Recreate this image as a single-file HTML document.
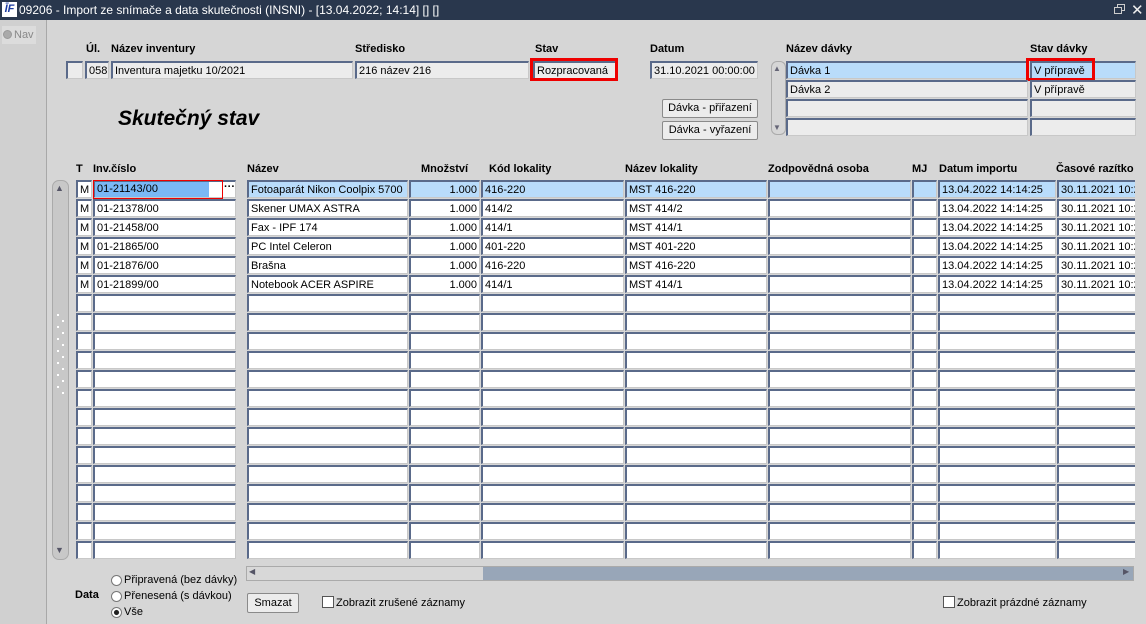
<!DOCTYPE html>
<html><head><meta charset="utf-8"><style>
*{box-sizing:border-box}
body{margin:0;width:1146px;height:624px;background:#d6d6d6;font-family:"Liberation Sans",Arial,sans-serif;font-size:11px;color:#000;position:relative;overflow:hidden}
.a{position:absolute}
.f{position:absolute;height:18px;background:#fff;border:1px solid #c8c8c8;border-top:2px solid #5a6a8a;border-left:2px solid #5a6a8a;padding:1px 2px 0 2px;white-space:nowrap;overflow:hidden;line-height:14px}
.g{background:#ececec}
.s{background:#b9dcfb}
.h{position:absolute;font-weight:bold;font-size:11px;white-space:nowrap}
.btn{position:absolute;background:#ececec;border:1px solid #8a8a8a;border-radius:2px;text-align:center;line-height:16px;font-size:11px}
.rad{position:absolute;width:11px;height:11px;border-radius:50%;background:#fff;border:1px solid #777}
.cb{position:absolute;width:12px;height:12px;background:#fff;border:1px solid #555}
</style></head><body>
<div class="a" style="left:0;top:0;width:1146px;height:20px;background:#29374d"></div>
<div class="a" style="left:2px;top:2px;width:15px;height:15px;background:#fff;color:#1a3aa0;font-weight:bold;font-style:italic;font-size:11px;line-height:15px;text-align:center">ĪF</div>
<div class="a" style="left:19px;top:3px;color:#fff;font-size:12px">09206 - Import ze snímače a data skutečnosti (INSNI) - [13.04.2022; 14:14] [] []</div>
<div class="a" style="left:1117px;top:4px;width:8px;height:7px;border:1px solid #ccc"></div>
<div class="a" style="left:1114px;top:7px;width:8px;height:7px;border:1px solid #ccc;background:#29374d"></div>
<div class="a" style="left:1131px;top:1px;color:#eee;font-size:15px">✕</div>
<div class="a" style="left:0;top:20px;width:47px;height:604px;background:#d0d0d0;border-right:1px solid #a8a8a8"></div>
<div class="a" style="left:2px;top:26px;width:34px;height:18px;background:#dcdcdc"></div>
<div class="rad" style="left:3px;top:30px;width:9px;height:9px;background:#aaa;border-color:#999"></div>
<div class="a" style="left:14px;top:29px;color:#888">Nav</div>

<div class="h" style="left:86px;top:43px">Úl.</div>
<div class="h" style="left:111px;top:43px">Název inventury</div>
<div class="h" style="left:355px;top:43px">Středisko</div>
<div class="h" style="left:535px;top:43px">Stav</div>
<div class="h" style="left:650px;top:43px">Datum</div>
<div class="h" style="left:786px;top:43px">Název dávky</div>
<div class="h" style="left:1030px;top:43px">Stav dávky</div>
<div class="f g" style="left:66px;top:61px;width:17px"></div>
<div class="f g" style="left:85px;top:61px;width:24px">058</div>
<div class="f g" style="left:111px;top:61px;width:242px">Inventura majetku 10/2021</div>
<div class="f g" style="left:355px;top:61px;width:174px">216 název 216</div>
<div class="f g" style="left:533px;top:61px;width:83px">Rozpracovaná</div>
<div class="a" style="left:530px;top:58px;width:88px;height:23px;border:3px solid #e00"></div>
<div class="f g" style="left:650px;top:61px;width:108px">31.10.2021 00:00:00</div>
<div class="a" style="left:771px;top:61px;width:15px;height:74px;background:#d6d6d6;border:1px solid #aaa;border-radius:6px"></div>
<div class="a" style="left:773px;top:64px;font-size:8px;color:#667">▲</div>
<div class="a" style="left:773px;top:123px;font-size:8px;color:#667">▼</div>
<div class="f s" style="left:786px;top:61px;width:242px">Dávka 1</div>
<div class="f s" style="left:1030px;top:61px;width:106px">V přípravě</div>
<div class="a" style="left:1026px;top:58px;width:69px;height:23px;border:3px solid #e00"></div>
<div class="f g" style="left:786px;top:80px;width:242px">Dávka 2</div>
<div class="f g" style="left:1030px;top:80px;width:106px">V přípravě</div>
<div class="f g" style="left:786px;top:99px;width:242px"></div>
<div class="f g" style="left:1030px;top:99px;width:106px"></div>
<div class="f g" style="left:786px;top:118px;width:242px"></div>
<div class="f g" style="left:1030px;top:118px;width:106px"></div>
<div class="btn" style="left:662px;top:99px;width:96px;height:19px">Dávka - přiřazení</div>
<div class="btn" style="left:662px;top:121px;width:96px;height:19px">Dávka - vyřazení</div>
<div class="a" style="left:118px;top:107px;font-size:21px;font-weight:bold;font-style:italic">Skutečný stav</div>

<div class="h" style="left:76px;top:163px">T</div>
<div class="h" style="left:93px;top:163px">Inv.číslo</div>
<div class="h" style="left:247px;top:163px">Název</div>
<div class="h" style="left:421px;top:163px">Množství</div>
<div class="h" style="left:489px;top:163px">Kód lokality</div>
<div class="h" style="left:625px;top:163px">Název lokality</div>
<div class="h" style="left:768px;top:163px">Zodpovědná osoba</div>
<div class="h" style="left:912px;top:163px">MJ</div>
<div class="h" style="left:939px;top:163px">Datum importu</div>
<div class="h" style="left:1056px;top:163px">Časové razítko</div>
<div class="a" style="left:52px;top:180px;width:17px;height:380px;background:#c8c8c8;border:1px solid #aaa;border-radius:7px"></div>
<div class="a" style="left:55px;top:183px;font-size:9px;color:#556">▲</div>
<div class="a" style="left:55px;top:545px;font-size:9px;color:#556">▼</div>
<div id="grid"></div>
<div class="a" style="left:1135px;top:160px;width:11px;height:400px;background:#d6d6d6;z-index:5"></div>

<div class="a" style="left:246px;top:566px;width:888px;height:15px;background:#98a6b8;border:1px solid #aaa"></div>
<div class="a" style="left:247px;top:567px;width:236px;height:13px;background:#d8d8d8"></div>
<div class="a" style="left:249px;top:567px;font-size:8px;color:#556">◀</div>
<div class="a" style="left:1123px;top:567px;font-size:8px;color:#556">▶</div>

<div class="h" style="left:75px;top:589px">Data</div>
<div class="rad" style="left:111px;top:575px"></div><div class="a" style="left:124px;top:574px">Připravená (bez dávky)</div>
<div class="rad" style="left:111px;top:591px"></div><div class="a" style="left:124px;top:590px">Přenesená (s dávkou)</div>
<div class="rad" style="left:111px;top:607px;background:radial-gradient(#222 35%,#fff 45%)"></div><div class="a" style="left:124px;top:606px">Vše</div>
<div class="btn" style="left:247px;top:593px;width:52px;height:20px;line-height:18px">Smazat</div>
<div class="cb" style="left:322px;top:596px"></div><div class="a" style="left:336px;top:597px">Zobrazit zrušené záznamy</div>
<div class="cb" style="left:943px;top:596px"></div><div class="a" style="left:957px;top:597px">Zobrazit prázdné záznamy</div>
<script>
var cols=[[76,16],[93,143],[247,161],[409,71],[481,143],[625,142],[768,143],[912,25],[938,118],[1057,90]];
var data=[["M","01-21143/00","Fotoaparát Nikon Coolpix 5700","1.000","416-220","MST 416-220","","","13.04.2022 14:14:25","30.11.2021 10:2"],
["M","01-21378/00","Skener UMAX ASTRA","1.000","414/2","MST 414/2","","","13.04.2022 14:14:25","30.11.2021 10:2"],
["M","01-21458/00","Fax - IPF 174","1.000","414/1","MST 414/1","","","13.04.2022 14:14:25","30.11.2021 10:2"],
["M","01-21865/00","PC Intel Celeron","1.000","401-220","MST 401-220","","","13.04.2022 14:14:25","30.11.2021 10:2"],
["M","01-21876/00","Brašna","1.000","416-220","MST 416-220","","","13.04.2022 14:14:25","30.11.2021 10:2"],
["M","01-21899/00","Notebook ACER ASPIRE","1.000","414/1","MST 414/1","","","13.04.2022 14:14:25","30.11.2021 10:2"]];
var h="";
for(var r=0;r<20;r++){var y=180+r*19;for(var c=0;c<10;c++){var d=data[r]?data[r][c]:"";var cls="f";
if(r==0&&c!=0)cls+=" s";
var st="left:"+cols[c][0]+"px;top:"+y+"px;width:"+cols[c][1]+"px;";if(c==3)st+="text-align:right;";
if(r==0&&c==1){h+='<div class="'+cls+'" style="'+st+'background:#fff"></div><div class="a" style="left:93px;top:'+y+'px;width:130px;height:19px;border:1px solid #e00;padding:1px"><div style="width:114px;height:15px;background:#7ab8f5;padding:1px 2px;line-height:13px">01-21143/00</div></div><div class="a" style="left:224px;top:'+(y+1)+'px;font-weight:bold">···</div>';continue;}
h+='<div class="'+cls+'" style="'+st+'">'+d+'</div>';}}
for(var i=0;i<14;i++){h+='<div class="a" style="left:'+(57+(i%2)*5)+'px;top:'+(314+i*6)+'px;width:2px;height:2px;background:#fff"></div>';}
document.getElementById("grid").innerHTML=h;
</script>
</body></html>
